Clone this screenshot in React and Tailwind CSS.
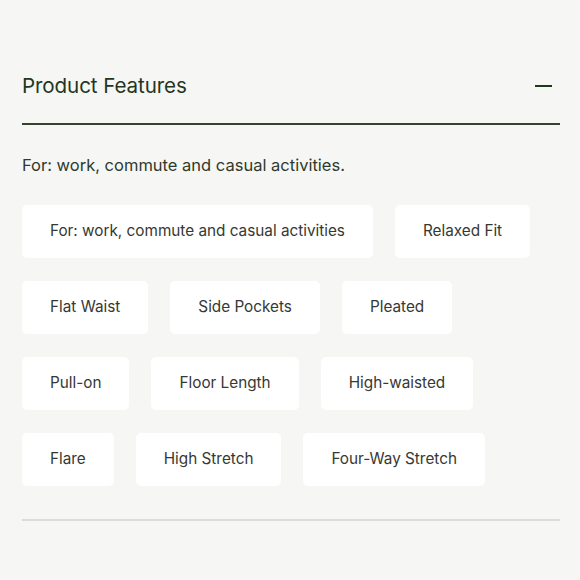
import React from 'react';

const features = [
  ['For: work, commute and casual activities', 'Relaxed Fit'],
  ['Flat Waist', 'Side Pockets', 'Pleated'],
  ['Pull-on', 'Floor Length', 'High-waisted'],
  ['Flare', 'High Stretch', 'Four-Way Stretch'],
];

const App = () => {
  return (
    <div className="min-h-[580px] w-[580px] bg-[#f6f6f5] font-['Inter',sans-serif]">
      <div className="px-[22px] pt-[70px]">
        {/* Header */}
        <div className="flex items-center justify-between h-[32px]">
          <h2 className="text-[20.6px] text-[#23361f] tracking-[-0.1px]">Product Features</h2>
          <span className="block w-[17px] h-[1.5px] bg-[#23361f] mr-[6px]" />
        </div>
        <div className="mt-[21px] h-[2px] w-[538px] bg-[#34442f]" />

        <p className="mt-[28px] text-[16.5px] text-[#2f3a2c]">For: work, commute and casual activities.</p>

        {/* Chips */}
        <div className="mt-[27px] flex flex-col gap-[23px]">
          {features.map((row, i) => (
            <div key={i} className="flex gap-[22px]">
              {row.map((f) => (
                <div
                  key={f}
                  className="h-[53px] px-[28px] flex items-center bg-white rounded-[5px] text-[15.3px] text-[#363832]"
                >
                  {f}
                </div>
              ))}
            </div>
          ))}
        </div>

        <div className="mt-[33px] h-[2px] w-[538px] bg-[#dcdcda]" />
      </div>
    </div>
  );
};

export default App;
